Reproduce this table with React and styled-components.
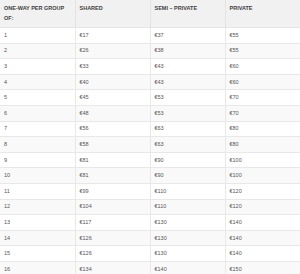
import React from "react";
import styled, { createGlobalStyle } from "styled-components";

const GlobalStyle = createGlobalStyle`
  html, body {
    margin: 0;
    padding: 0;
    background: #ffffff;
  }
  body {
    font-family: "Liberation Sans", Arial, sans-serif;
  }
`;

const PriceTable = styled.table`
  width: 300px;
  border-collapse: collapse;
  table-layout: fixed;
  font-size: 5.5px;
  color: #555555;
`;

const HeadCell = styled.th`
  background: #f1f1f1;
  border: 1px solid #e4e4e4;
  border-top: none;
  height: 24px;
  padding: 3px 4px 0;
  text-align: left;
  vertical-align: top;
  font-weight: bold;
  text-transform: uppercase;
  line-height: 10px;
  color: #3f3f3f;
  &:first-child { border-left: none; }
  &:last-child { border-right: none; }
`;

const Row = styled.tr`
  height: 15.6px;
  background: ${props => (props.$striped ? "#f9f9f9" : "#ffffff")};
`;

const Cell = styled.td`
  border: 1px solid #e8e8e8;
  padding: 0 4px;
  vertical-align: middle;
  line-height: 7px;
  &:first-child { border-left: none; }
  &:last-child { border-right: none; }
`;

const rows = [
  [1, 17, 37, 55],
  [2, 26, 38, 55],
  [3, 33, 43, 60],
  [4, 40, 43, 60],
  [5, 45, 53, 70],
  [6, 48, 53, 70],
  [7, 56, 63, 80],
  [8, 58, 63, 80],
  [9, 81, 90, 100],
  [10, 81, 90, 100],
  [11, 99, 110, 120],
  [12, 104, 110, 120],
  [13, 117, 130, 140],
  [14, 126, 130, 140],
  [15, 126, 130, 140],
  [16, 134, 140, 150],
];

const App = () => (
  <>
    <GlobalStyle />
    <PriceTable>
      <thead>
        <tr>
          <HeadCell>One-way per group of:</HeadCell>
          <HeadCell>Shared</HeadCell>
          <HeadCell>Semi – Private</HeadCell>
          <HeadCell>Private</HeadCell>
        </tr>
      </thead>
      <tbody>
        {rows.map(([n, shared, semi, priv]) => (
          <Row key={n} $striped={n % 2 === 0}>
            <Cell>{n}</Cell>
            <Cell>€{shared}</Cell>
            <Cell>€{semi}</Cell>
            <Cell>€{priv}</Cell>
          </Row>
        ))}
      </tbody>
    </PriceTable>
  </>
);

export default App;
